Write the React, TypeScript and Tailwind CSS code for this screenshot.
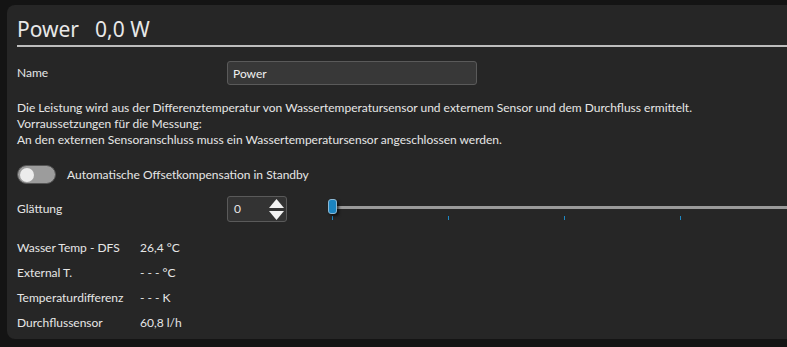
import React from "react";

const rows = [
  { label: "Wasser Temp - DFS", value: "26,4 °C" },
  { label: "External T.", value: "- - - °C" },
  { label: "Temperaturdifferenz", value: "- - - K" },
  { label: "Durchflussensor", value: "60,8 l/h" },
];

const App = () => {
  const [name, setName] = React.useState("Power");
  const [on, setOn] = React.useState(false);
  const [smooth, setSmooth] = React.useState(0);

  return (
    <div
      className="h-[347px] w-[787px] overflow-hidden bg-[#141414] pl-[7px] pt-[5px] text-[12px] text-[#e6e6e6]"
      style={{ fontFamily: 'Lato, "Noto Sans", sans-serif' }}
    >
      <div className="h-[334px] w-[800px] rounded-[8px] bg-[#262626] pl-[10px] pt-[10px]">
        {/* header */}
        <div
          className="flex h-[32px] items-center gap-[16px] border-b-2 border-[#bdbdbd] pb-[1px] text-[21px] leading-none text-[#e8e8e8]"
          style={{ fontFamily: '"Noto Sans", sans-serif' }}
        >
          <span>Power</span>
          <span>0,0 W</span>
        </div>

        {/* name */}
        <div className="mt-[14px] flex h-[24px] items-center">
          <span className="w-[210px]">Name</span>
          <input
            className="h-[24px] w-[250px] rounded-[3px] border border-[#5a5a5a] bg-[#383838] px-[5px] text-[12px] text-[#f0f0f0] outline-none"
            value={name}
            onChange={(e) => setName(e.target.value)}
          />
        </div>

        {/* description */}
        <div className="mt-[15px] leading-[16px]">
          <p>
            Die Leistung wird aus der Differenztemperatur von Wassertemperatursensor und externem Sensor und dem
            Durchfluss ermittelt.
          </p>
          <p>Vorraussetzungen für die Messung:</p>
          <p>An den externen Sensoranschluss muss ein Wassertemperatursensor angeschlossen werden.</p>
        </div>

        {/* toggle */}
        <div className="mt-[17px] flex h-[19px] items-center">
          <button
            onClick={() => setOn(!on)}
            className="flex h-[19px] w-[39px] items-center rounded-full border border-[#555] bg-[#9c9c9c] px-[2px]"
          >
            <span
              className={
                on
                  ? "ml-auto h-[14px] w-[14px] rounded-full bg-[#ececec]"
                  : "h-[14px] w-[14px] rounded-full bg-[#ececec]"
              }
            />
          </button>
          <span className="ml-[11px]">Automatische Offsetkompensation in Standby</span>
        </div>

        {/* smoothing */}
        <div className="mt-[12px] flex h-[26px] items-center">
          <span className="w-[210px]">Glättung</span>
          <div className="flex h-[26px] w-[60px] items-center rounded-[3px] border border-[#5a5a5a] bg-[#333] pl-[6px] pr-[2px]">
            <span className="flex-1">{smooth}</span>
            <div className="flex flex-col gap-[2px]">
              <svg width="15" height="10" viewBox="0 0 15 10" onClick={() => setSmooth(Math.min(3, smooth + 1))}>
                <polygon points="7.5,0 15,9 0,9" fill="#f2f2f2" />
              </svg>
              <svg width="15" height="9" viewBox="0 0 15 9" onClick={() => setSmooth(Math.max(0, smooth - 1))}>
                <polygon points="0,0 15,0 7.5,9" fill="#f2f2f2" />
              </svg>
            </div>
          </div>
          {/* slider */}
          <div className="relative ml-[41px] h-[26px] flex-1">
            <div className="absolute left-[5px] right-0 top-[10px] h-[3px] bg-[#9a9a9a]" />
            <div className="absolute left-[4px] top-[20px] h-[4px] w-[1px] bg-[#1e88c4]" />
            <div className="absolute left-[120px] top-[20px] h-[4px] w-[1px] bg-[#1e88c4]" />
            <div className="absolute left-[236px] top-[20px] h-[4px] w-[1px] bg-[#1e88c4]" />
            <div className="absolute left-[352px] top-[20px] h-[4px] w-[1px] bg-[#1e88c4]" />
            <div className="absolute left-0 top-[3px] h-[15px] w-[9px] rounded-[3px] border border-[#8bb8d4] bg-[#1b84c0] shadow-[2px_2px_3px_rgba(0,0,0,0.6)]" />
          </div>
        </div>

        {/* values */}
        <div className="mt-[13px] flex flex-col">
          {rows.map((row, i) => (
            <div key={i} className="flex h-[25px] items-center">
              <span className="w-[123px]">{row.label}</span>
              <span>{row.value}</span>
            </div>
          ))}
        </div>
      </div>
    </div>
  );
};

export default App;
